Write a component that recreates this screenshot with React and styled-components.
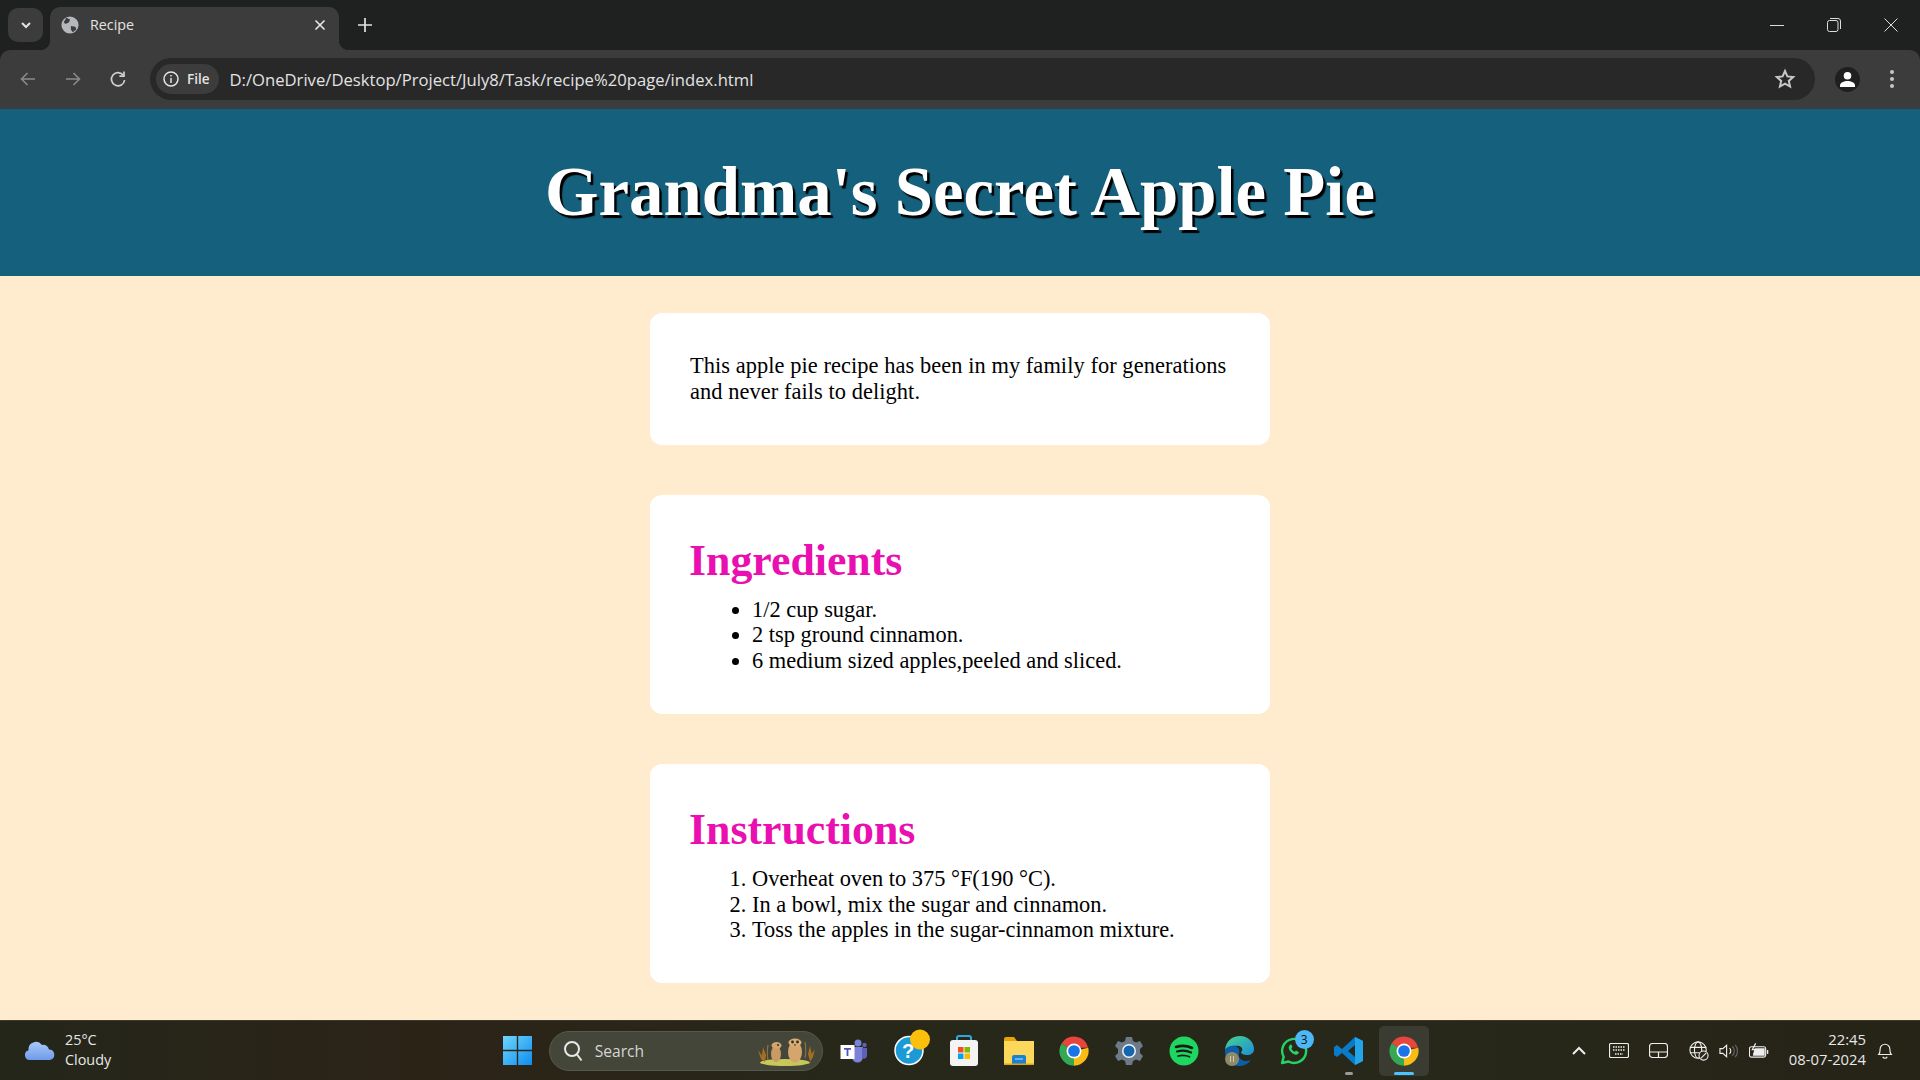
import React from 'react';
import styled, { createGlobalStyle } from 'styled-components';

const uiFont = '"Open Sans", "Noto Sans", sans-serif';
const chromeGrey = '#3c3c3c';

const GlobalStyle = createGlobalStyle`
  html, body {
    margin: 0;
    padding: 0;
    height: 100%;
    overflow: hidden;
  }
`;

const Screen = styled.div`
  width: 1920px;
  height: 1080px;
  display: flex;
  flex-direction: column;
  overflow: hidden;
  background-color: #1f2121;
`;

const TabStrip = styled.div`
  height: 50px;
  flex: none;
  background-color: #1f2121;
  display: flex;
  align-items: flex-end;
  padding-left: 8px;
  font-family: ${uiFont};
`;

const TabSearch = styled.div`
  width: 35px;
  height: 34px;
  margin: 0 7px 8px 0;
  border-radius: 10px;
  background-color: ${chromeGrey};
  display: flex;
  align-items: center;
  justify-content: center;
`;

const Tab = styled.div`
  position: relative;
  width: 289px;
  height: 43px;
  padding: 0 13px 8px 11px;
  box-sizing: border-box;
  background-color: ${chromeGrey};
  border-radius: 10px 10px 0 0;
  display: flex;
  align-items: center;
  color: #e3e3e3;
  font-size: 14.3px;
  gap: 11px;

  &::before, &::after {
    content: "";
    position: absolute;
    bottom: 0;
    width: 10px;
    height: 10px;
  }

  &::before {
    left: -10px;
    background: radial-gradient(circle at 0 0, transparent 10px, ${chromeGrey} 10.5px);
  }

  &::after {
    right: -10px;
    background: radial-gradient(circle at 100% 0, transparent 10px, ${chromeGrey} 10.5px);
  }
`;

const TabTitle = styled.span`
  flex: 1;
`;

const NewTab = styled.div`
  width: 52px;
  height: 43px;
  padding-bottom: 8px;
  box-sizing: border-box;
  display: flex;
  align-items: center;
  justify-content: center;
`;

const Spacer = styled.div`
  flex: 1;
`;

const WindowButtons = styled.div`
  align-self: flex-start;
  display: flex;
  height: 50px;
  align-items: center;
  padding-right: 1px;
`;

const WindowButton = styled.div`
  width: 57px;
  height: 50px;
  display: flex;
  align-items: center;
  justify-content: center;
`;

const Toolbar = styled.div`
  height: 59px;
  flex: none;
  box-sizing: border-box;
  background-color: ${chromeGrey};
  border-radius: 10px 10px 0 0;
  display: flex;
  align-items: center;
  padding: 0 20px 1px 5px;
  font-family: ${uiFont};
`;

const NavButton = styled.div`
  width: 45px;
  height: 36px;
  display: flex;
  align-items: center;
  justify-content: center;
`;

const AddressBar = styled.div`
  flex: 1;
  height: 42px;
  margin-left: 10px;
  border-radius: 21px;
  background-color: #282828;
  display: flex;
  align-items: center;
  padding: 0 19px 0 6px;
  color: #e3e3e3;
  font-size: 16.65px;
`;

const SiteChip = styled.div`
  width: 63px;
  height: 30px;
  border-radius: 15px;
  background-color: ${chromeGrey};
  display: flex;
  align-items: center;
  gap: 7px;
  padding-left: 6px;
  box-sizing: border-box;
  font-size: 13.5px;
  font-weight: 600;
  margin-right: 10.5px;
`;

const Url = styled.span`
  flex: 1;
`;

const Avatar = styled.div`
  width: 25px;
  height: 25px;
  border-radius: 50%;
  background-color: #1f1f1f;
  margin-left: 19.5px;
  display: flex;
  align-items: center;
  justify-content: center;
`;

const Kebab = styled.div`
  margin-left: 24.5px;
  width: 16px;
  display: flex;
  justify-content: center;
`;

const Page = styled.main`
  flex: 1;
  min-height: 0;
  overflow: hidden;
  background-color: #ffebcd;
  font-family: "Liberation Serif", "Times New Roman", serif;
  color: #000;
`;

const Banner = styled.header`
  height: 167px;
  background-color: #14607d;
  display: flex;
  align-items: center;
  justify-content: center;
`;

const Title = styled.h1`
  margin: 0;
  font-size: 68.8px;
  font-weight: bold;
  color: #fff;
  text-shadow: 2.5px 2.5px 1px #000;
`;

const Content = styled.div`
  width: 620px;
  margin: 37px auto 0;
  display: flex;
  flex-direction: column;
  gap: 50px;
`;

const Card = styled.section`
  background-color: #fff;
  border-radius: 12px;
  padding: 40px 36px 40px 40px;
  box-sizing: border-box;
`;

const Intro = styled.p`
  margin: 0;
  font-size: 22.4px;
  line-height: 25.75px;
  letter-spacing: 0.07px;
`;

const CardTitle = styled.h2`
  margin: 0 0 12px -1px;
  font-size: 43.8px;
  line-height: 50px;
  font-weight: bold;
  color: #ea0fb0;
`;

const Bullets = styled.ul`
  margin: 0;
  padding-left: 62px;
  font-size: 22.4px;
  line-height: 25.75px;
`;

const Steps = styled.ol`
  margin: 0;
  padding-left: 62px;
  font-size: 22.4px;
  line-height: 25.75px;
`;

const Taskbar = styled.footer`
  height: 60px;
  flex: none;
  border-top: 1px solid #3a3a30;
  box-sizing: border-box;
  background: linear-gradient(90deg, #24261a 0%, #2c2317 22%, #27281a 45%, #27281a 75%, #262317 100%);
  display: grid;
  grid-template-columns: 1fr auto 1fr;
  align-items: center;
  font-family: ${uiFont};
  color: #e8e8e8;
`;

const Weather = styled.div`
  display: flex;
  align-items: center;
  gap: 10px;
  padding: 0 0 2px 25px;
  font-size: 14.4px;
  line-height: 20px;
`;

const Centre = styled.div`
  display: flex;
  align-items: center;
  padding-left: 17px;
`;

const SearchBox = styled.div`
  width: 274px;
  height: 40px;
  margin: 0 6px 0 16.5px;
  border-radius: 20px;
  box-sizing: border-box;
  border: 1px solid #55584a;
  background-color: #44463a;
  color: #d5d5d5;
  display: flex;
  align-items: center;
  padding: 0 5px 0 13px;
  gap: 12px;
  font-size: 15.6px;
`;

const AppSlot = styled.div`
  position: relative;
  width: 50px;
  height: 50px;
  margin-right: 5px;
  display: flex;
  align-items: center;
  justify-content: center;
  border-radius: 5px;
  background-color: ${(p) => (p.$active ? '#3a3c31' : 'transparent')};
`;

const RunningDot = styled.span`
  position: absolute;
  left: 50%;
  bottom: 1px;
  transform: translateX(-50%);
  height: 3px;
  border-radius: 2px;
  width: ${(p) => (p.$active ? 20 : 8)}px;
  background-color: ${(p) => (p.$active ? '#4cc2ff' : '#9a9a9a')};
`;

const Badge = styled.span`
  position: absolute;
  top: 4px;
  right: 5px;
  width: 19px;
  height: 19px;
  border-radius: 50%;
  background-color: #4cb8f5;
  color: #111;
  font-size: 12px;
  line-height: 19px;
  text-align: center;
`;

const Tray = styled.div`
  display: flex;
  align-items: center;
  justify-content: flex-end;
  padding-right: 27px;
`;

const TrayIcon = styled.div`
  display: flex;
  margin-right: ${(p) => p.$gap}px;
`;

const Clock = styled.div`
  text-align: right;
  font-size: 14.8px;
  line-height: 20px;
  margin: 0 11px 0 20px;
  padding-bottom: 3px;
`;

const ArrowIcon = ({ flip, color }) => (
  <svg width="20" height="20" viewBox="0 0 20 20" fill="none" stroke={color} strokeWidth="1.6">
    <g transform={flip ? 'rotate(180 10 10)' : undefined}>
      <path d="M17 10H4M9.5 4 3.5 10l6 6" />
    </g>
  </svg>
);

const ChromeLogo = () => (
  <svg width="30" height="30" viewBox="4 4 40 40">
    <path d="M24 24 7.4 14A19.5 19.5 0 0 1 43 19.5H24z" fill="#e8453c" />
    <path d="M24 24 43 19.5A19.5 19.5 0 0 1 24 43.5z" fill="#f9bc15" />
    <path d="M24 24 24 43.5A19.5 19.5 0 0 1 7.4 14z" fill="#34a853" />
    <circle cx="24" cy="24" r="10" fill="#fff" />
    <circle cx="24" cy="24" r="7.8" fill="#1a73e8" />
  </svg>
);

export default function App() {
  return (
    <Screen>
      <GlobalStyle />
      <TabStrip>
        <TabSearch>
          <svg width="12" height="12" viewBox="0 0 12 12" fill="none" stroke="#e3e3e3" strokeWidth="2">
            <path d="M2 4l4 4 4-4" />
          </svg>
        </TabSearch>
        <Tab>
          <svg width="18" height="18" viewBox="0 0 20 20">
            <circle cx="10" cy="10" r="9.5" fill="#b4b8bc" />
            <path d="M6 2 10 4 9 7 5 9 3 7zM11 11l5 1 1 3-4 3-2-3z" fill="#3c3c3c" />
          </svg>
          <TabTitle>Recipe</TabTitle>
          <svg width="12" height="12" viewBox="0 0 12 12" stroke="#e3e3e3" strokeWidth="1.7">
            <path d="M1.5 1.5l9 9M10.5 1.5l-9 9" />
          </svg>
        </Tab>
        <NewTab>
          <svg width="14" height="14" viewBox="0 0 14 14" stroke="#e3e3e3" strokeWidth="1.7">
            <path d="M7 0v14M0 7h14" />
          </svg>
        </NewTab>
        <Spacer />
        <WindowButtons>
          <WindowButton>
            <svg width="14" height="14" viewBox="0 0 14 14" stroke="#ddd"><path d="M0 7.5h14" /></svg>
          </WindowButton>
          <WindowButton>
            <svg width="14" height="14" viewBox="0 0 14 14" fill="none" stroke="#ddd">
              <rect x="0.5" y="2.5" width="10.5" height="11" rx="2" />
              <path d="M3 0.5h8a2.5 2.5 0 0 1 2.5 2.5v8" />
            </svg>
          </WindowButton>
          <WindowButton>
            <svg width="14" height="14" viewBox="0 0 14 14" stroke="#ddd"><path d="M0.5 0.5l13 13M13.5 0.5l-13 13" /></svg>
          </WindowButton>
        </WindowButtons>
      </TabStrip>

      <Toolbar>
        <NavButton><ArrowIcon color="#8a8a8a" /></NavButton>
        <NavButton><ArrowIcon flip color="#8a8a8a" /></NavButton>
        <NavButton>
          <svg width="20" height="20" viewBox="0 0 20 20" fill="none" stroke="#cfcfcf" strokeWidth="1.7">
            <path d="M15.5 6.5A6.600 6.600 0 1 0 16.600 11" />
            <path d="M16 2.5v4.600h-4.600" />
          </svg>
        </NavButton>
        <AddressBar>
          <SiteChip>
            <svg width="18" height="18" viewBox="0 0 18 18" fill="none" stroke="#e3e3e3" strokeWidth="1.5">
              <circle cx="9" cy="9" r="7" />
              <path d="M9 8v5M9 5v1.600" />
            </svg>
            File
          </SiteChip>
          <Url>D:/OneDrive/Desktop/Project/July8/Task/recipe%20page/index.html</Url>
          <svg width="22" height="22" viewBox="0 0 22 22" fill="none" stroke="#c7c7c7" strokeWidth="2">
            <path d="M11 3l2.400 5.400 5.800.6-4.400 3.900 1.300 5.700L11 15.700 5.900 18.600l1.300-5.700L2.800 9l5.800-.6z" />
          </svg>
        </AddressBar>
        <Avatar>
          <svg width="17" height="17" viewBox="0 0 17 17" fill="#fff">
            <circle cx="8.5" cy="4.8" r="3.8" />
            <path d="M1 16v-1.500C1 11.500 5 10 8.500 10s7.500 1.500 7.500 4.500V16z" />
          </svg>
        </Avatar>
        <Kebab>
          <svg width="4" height="18" viewBox="0 0 4 18" fill="#c7c7c7">
            <circle cx="2" cy="2" r="2" />
            <circle cx="2" cy="9" r="2" />
            <circle cx="2" cy="16" r="2" />
          </svg>
        </Kebab>
      </Toolbar>

      <Page>
        <Banner>
          <Title>Grandma's Secret Apple Pie</Title>
        </Banner>
        <Content>
          <Card>
            <Intro>This apple pie recipe has been in my family for generations and never fails to delight.</Intro>
          </Card>
          <Card>
            <CardTitle>Ingredients</CardTitle>
            <Bullets>
              <li>1/2 cup sugar.</li>
              <li>2 tsp ground cinnamon.</li>
              <li>6 medium sized apples,peeled and sliced.</li>
            </Bullets>
          </Card>
          <Card>
            <CardTitle>Instructions</CardTitle>
            <Steps>
              <li>Overheat oven to 375 °F(190 °C).</li>
              <li>In a bowl, mix the sugar and cinnamon.</li>
              <li>Toss the apples in the sugar-cinnamon mixture.</li>
            </Steps>
          </Card>
        </Content>
      </Page>

      <Taskbar>
        <Weather>
          <svg width="30" height="20" viewBox="0 0 30 20">
            <defs>
              <linearGradient id="cloud" x1="0" y1="0" x2="0" y2="1">
                <stop offset="0" stopColor="#a9c8fa" />
                <stop offset="1" stopColor="#6f9bea" />
              </linearGradient>
            </defs>
            <path d="M5 20a5 5 0 0 1-1.500-9.800A7.500 7.500 0 0 1 17 5a5.500 5.500 0 0 1 7 4.500A5.300 5.300 0 0 1 25 20z" fill="url(#cloud)" />
          </svg>
          <div>
            <div>25°C</div>
            <div>Cloudy</div>
          </div>
        </Weather>

        <Centre>
          <svg width="29" height="29" viewBox="0 0 30 30">
            <defs>
              <linearGradient id="win" x1="0" y1="0" x2="1" y2="1">
                <stop offset="0" stopColor="#6fd6fb" />
                <stop offset="1" stopColor="#0f8cf0" />
              </linearGradient>
            </defs>
            <path d="M0 0h14.300v14.300H0zM15.700 0H30v14.300H15.700zM0 15.700h14.300V30H0zM15.700 15.700H30V30H15.700z" fill="url(#win)" />
          </svg>
          <SearchBox>
            <svg width="20" height="22" viewBox="0 0 20 22" fill="none" stroke="#e8e8e8" strokeWidth="2">
              <circle cx="9" cy="9" r="7" />
              <path d="M14 14.500 18.500 20.500" />
            </svg>
            <span>Search</span>
            <Spacer />
            <svg width="61" height="34" viewBox="0 0 61 34">
              <ellipse cx="29" cy="28.500" rx="25" ry="3.500" fill="#c8c85a" />
              <path d="M2 16l5 7 2 5-4-3zM7 13l3 8-1 7-3-7zM54 12l2 9-2 6-2-7zM59 15l-2 8-3 5 1-7z" fill="#a5701f" />
              <path d="M12 11c-1 6-1 10 0 15M49 8c1 6 1 11 0 16" fill="none" stroke="#9a7a48" strokeWidth="1" />
              <ellipse cx="20" cy="20" rx="5" ry="8" fill="#c99a62" />
              <ellipse cx="20.500" cy="11.500" rx="5" ry="3.500" fill="#d2a56c" />
              <circle cx="22" cy="11" r="1" fill="#3a2a18" />
              <ellipse cx="39" cy="18" rx="7" ry="10.500" fill="#d5a56e" />
              <ellipse cx="39" cy="8.500" rx="6.500" ry="4" fill="#d9ae78" />
              <circle cx="36.500" cy="8" r="1.400" fill="#3a2a18" />
              <circle cx="41.500" cy="8" r="1.400" fill="#3a2a18" />
              <ellipse cx="39" cy="11" rx="1.200" ry=".8" fill="#5a3a22" />
            </svg>
          </SearchBox>

          <AppSlot>
            <svg width="28" height="28" viewBox="0 0 28 28">
              <circle cx="18" cy="6" r="3.500" fill="#7b83d6" />
              <circle cx="24.500" cy="8" r="2.200" fill="#5b62b8" />
              <path d="M12 10h11v10a5 5 0 0 1-11 0z" fill="#7b83d6" />
              <path d="M22 11h5v8a3 3 0 0 1-5 2z" fill="#5b62b8" />
              <rect x="0.500" y="8" width="14" height="14" fill="#fff" />
              <path d="M4 11h7v1.800H8.400V19H6.600v-6.200H4z" fill="#4b53bc" />
            </svg>
          </AppSlot>
          <AppSlot>
            <svg width="50" height="50" viewBox="0 0 50 50">
              <circle cx="25" cy="24.500" r="14" fill="#1b9ad6" stroke="#fff" strokeWidth="1.500" />
              <text x="24" y="32" textAnchor="middle" fontFamily="Liberation Sans, sans-serif" fontWeight="bold" fontSize="20" fill="#fff">?</text>
              <circle cx="36" cy="13.500" r="10" fill="#fcc00c" />
            </svg>
          </AppSlot>
          <AppSlot>
            <svg width="30" height="32" viewBox="0 0 30 32">
              <path d="M8 6V3a2 2 0 0 1 2-2h10a2 2 0 0 1 2 2v3" fill="none" stroke="#2aa8e0" strokeWidth="2" />
              <rect x="1" y="5" width="28" height="26" rx="3" fill="#f4f4f4" />
              <path d="M9 12h5.500v5.500H9z" fill="#f25022" />
              <path d="M15.500 12H21v5.500h-5.500z" fill="#7fba00" />
              <path d="M9 18.500h5.500V24H9z" fill="#00a4ef" />
              <path d="M15.500 18.500H21V24h-5.500z" fill="#ffb900" />
            </svg>
          </AppSlot>
          <AppSlot>
            <svg width="32" height="28" viewBox="0 0 32 28">
              <path d="M1 2a2 2 0 0 1 2-2h8l3 4h-13z" fill="#e5a50a" />
              <path d="M1 4h30v24H1z" fill="#fbd75b" />
              <path d="M9 20a2 2 0 0 1 2-2h10a2 2 0 0 1 2 2v8H9z" fill="#1b80d0" />
              <path d="M12 22h8" stroke="#7fc7f5" strokeWidth="1.500" />
              <path d="M1 26.500h30V28H1z" fill="#e5a50a" />
            </svg>
          </AppSlot>
          <AppSlot><ChromeLogo /></AppSlot>
          <AppSlot>
            <svg width="30" height="30" viewBox="0 0 30 30">
              <path d="M12 1h6l1 4 3 1.500 4-1.500 3 5-3 3v4l3 3-3 5-4-1.500-3 1.500-1 4h-6l-1-4-3-1.500-4 1.500-3-5 3-3v-4l-3-3 3-5 4 1.500 3-1.500z" fill="#6c7a89" />
              <circle cx="15" cy="15" r="7" fill="#f2f2f2" />
              <circle cx="15" cy="15" r="5.500" fill="#1466b0" />
            </svg>
          </AppSlot>
          <AppSlot>
            <svg width="30" height="30" viewBox="0 0 30 30" fill="none" stroke="#1a1a1a" strokeLinecap="round">
              <circle cx="15" cy="15" r="14.500" fill="#1ed760" stroke="none" />
              <path d="M7 11c6-1.800 11-1.500 16 1" strokeWidth="2.600" />
              <path d="M8 15.500c5-1.400 10-1 14 1" strokeWidth="2.200" />
              <path d="M9 20c4-1 8-.8 11.500 .8" strokeWidth="1.800" />
            </svg>
          </AppSlot>
          <AppSlot>
            <svg width="30" height="30" viewBox="0 0 30 30">
              <defs>
                <linearGradient id="edge" x1="0" y1="0" x2="1" y2="1">
                  <stop offset="0" stopColor="#46d48c" />
                  <stop offset="1" stopColor="#1c8fdc" />
                </linearGradient>
              </defs>
              <path d="M1 14C2 5 8 0 16 0c8 0 14 6 14 13 0 4-3 6-7 6-3 0-6-1-6-3 2-1 2-5-2-6-6-1-12 1-14 4z" fill="url(#edge)" />
              <path d="M1 14c2-3 6-5 10-4 4 1 5 5 4 8-1 5 5 9 12 6-3 4-7 6-12 6C7 30 0 23 1 14z" fill="#0c5ea8" />
              <circle cx="8" cy="23" r="7" fill="#8f8a6a" />
              <path d="M6 20h1v6H6zM9 20h1v6H9z" fill="#d8c8a8" />
            </svg>
          </AppSlot>
          <AppSlot>
            <svg width="30" height="30" viewBox="0 0 30 30" fill="none">
              <path d="M3 27l1.700-6.200A12 12 0 1 1 9.500 25.500z" stroke="#25d366" strokeWidth="2.400" strokeLinejoin="round" />
              <path d="M10.500 9.500c-1.500 1.500-1 4 1.500 6.500s5 3.500 7 2l1-1.800-3-1.700-1.200 1.200c-1.500-.5-3-2-3.500-3.500l1.200-1.200-1.500-3z" fill="#25d366" />
            </svg>
            <Badge>3</Badge>
          </AppSlot>
          <AppSlot>
            <svg width="30" height="30" viewBox="0 0 30 30">
              <path d="M21 1l8 4v20l-8 4L8 17 3 21l-3-2V11l3-2 5 4zM21 9l-7 6 7 6z" fill="#0a7bc8" />
              <path d="M21 1l8 4v20l-8 4z" fill="#23a5ea" />
            </svg>
            <RunningDot />
          </AppSlot>
          <AppSlot $active>
            <ChromeLogo />
            <RunningDot $active />
          </AppSlot>
        </Centre>

        <Tray>
          <TrayIcon $gap={23}>
            <svg width="14" height="9" viewBox="0 0 14 9" fill="none" stroke="#eee" strokeWidth="2">
              <path d="M1 8l6-6 6 6" />
            </svg>
          </TrayIcon>
          <TrayIcon $gap={20}>
            <svg width="20" height="15" viewBox="0 0 20 15" fill="none" stroke="#eee" strokeWidth="1.200">
              <rect x="0.500" y="0.500" width="19" height="14" rx="1.500" />
              <path d="M4 4h12M4 7h12M6 11h8" strokeDasharray="1.500 1" strokeWidth="1.500" />
            </svg>
          </TrayIcon>
          <TrayIcon $gap={21}>
            <svg width="19" height="15" viewBox="0 0 19 15" fill="none" stroke="#eee" strokeWidth="1.200">
              <rect x="0.500" y="0.500" width="18" height="14" rx="3" />
              <path d="M0.500 9h18M9.500 9v5.500" />
            </svg>
          </TrayIcon>
          <TrayIcon $gap={10}>
            <svg width="20" height="20" viewBox="0 0 22 22" fill="none" stroke="#eee" strokeWidth="1.200">
              <circle cx="10" cy="10" r="9" />
              <ellipse cx="10" cy="10" rx="4" ry="9" />
              <path d="M1 7h18M1 13h18" />
              <circle cx="16" cy="16" r="5" fill="#2a2a1c" />
              <path d="M13 19l6-6" />
            </svg>
          </TrayIcon>
          <TrayIcon $gap={10}>
            <svg width="20" height="16" viewBox="0 0 21 16" fill="none" stroke="#eee" strokeWidth="1.200">
              <path d="M1 5.500h3L8 2v12l-4-3.500H1z" />
              <path d="M11 5a4 4 0 0 1 0 6" />
              <path d="M14 3a7 7 0 0 1 0 10M17 1.500a10 10 0 0 1 0 13" stroke="#666" />
            </svg>
          </TrayIcon>
          <TrayIcon $gap={0}>
            <svg width="20" height="16" viewBox="0 0 21 16" fill="none" stroke="#eee" strokeWidth="1.200">
              <rect x="0.500" y="3.500" width="17" height="11" rx="2" />
              <path d="M6 5h10.500v8H4z" fill="#eee" stroke="none" />
              <path d="M19.500 7v4" strokeWidth="1.500" />
              <path d="M7 0 3.500 6.500h3.500l-2 5" strokeWidth="1.300" />
            </svg>
          </TrayIcon>
          <Clock>
            <div>22:45</div>
            <div>08-07-2024</div>
          </Clock>
          <svg width="16" height="19" viewBox="0 0 18 20" fill="none" stroke="#eee" strokeWidth="1.300">
            <path d="M2 14.500c1.500-1.500 1.500-3 1.500-6a5.500 5.500 0 0 1 11 0c0 3 0 4.500 1.500 6z" />
            <path d="M6.500 17a2.700 2.700 0 0 0 5 0" />
          </svg>
        </Tray>
      </Taskbar>
    </Screen>
  );
}
